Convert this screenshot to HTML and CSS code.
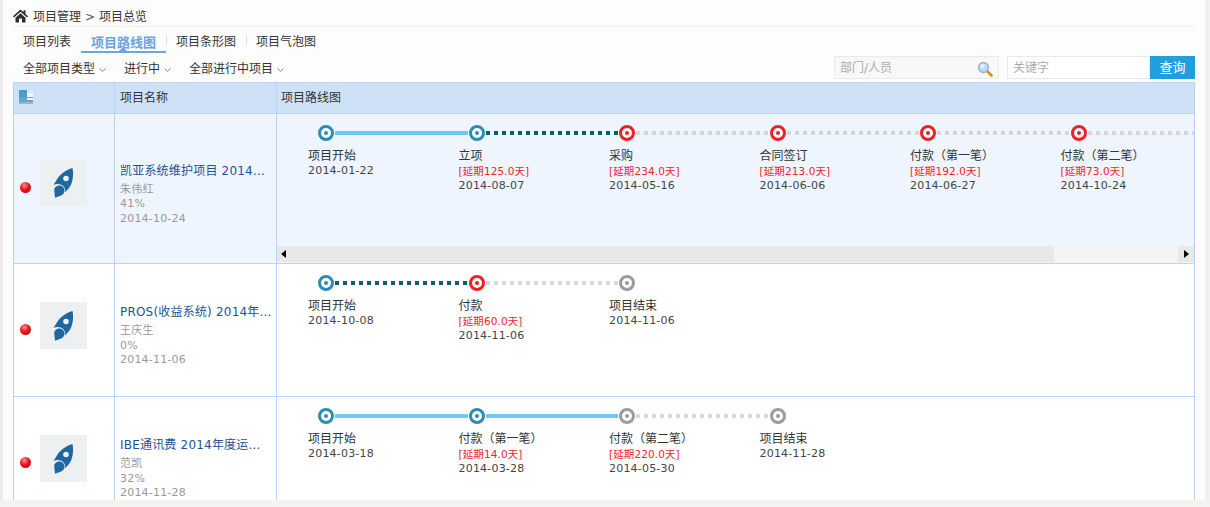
FILE: index.html
```html
<!DOCTYPE html>
<html lang="zh-CN">
<head>
<meta charset="utf-8">
<title>项目总览</title>
<link rel="stylesheet" href="styles.css">
</head>
<body>
<svg class="defs" width="0" height="0" aria-hidden="true">
  <symbol id="rocket" viewBox="0 0 47 47">
    <path d="M32.500 9C26 11 20.500 15 17.500 19.500L13.500 26C17 24 22 25 24 28C25.300 30 25.500 32 25 33.500L29 29C32.500 25 34 16 32.500 9Z" fill="#1f689f"/>
    <circle cx="26" cy="19.500" r="2.800" fill="#ecf0f1"/>
    <path d="M19.500 26.500C22.500 26.500 24.800 29 24.500 32C24.300 34 23 35.800 21.200 36.600L15 38.800L14.200 31C14.300 28.500 16.800 26.500 19.500 26.500Z" fill="#1f689f"/>
  </symbol>
  <symbol id="chev" viewBox="0 0 7 4">
    <path d="M.5.500L3.500 3.300L6.500.500" fill="none" stroke="#888" stroke-width="1"/>
  </symbol>
</svg>
<div class="shell">
  <div class="rail-left"></div>
  <main class="main">
    <nav class="crumb">
      <svg class="home" width="15" height="14" viewBox="0 0 15 14"><path d="M7.500.500L0 7.300L1 8.400L7.500 2.700L14 8.400L15 7.300L12.500 5V1.300H10.500V3.200ZM2.500 8.700V13.500H6V9.500H9V13.500H12.500V8.700L7.500 4.200Z" fill="#2d2d2d"/></svg>
      <span>项目管理</span><span class="crumb-sep">&gt;</span><span>项目总览</span>
    </nav>
    <div class="tabs">
      <a class="tab">项目列表</a>
      <a class="tab tab-active">项目路线图</a>
      <a class="tab tab-sep">项目条形图</a>
      <a class="tab tab-sep">项目气泡图</a>
    </div>
    <div class="toolbar">
      <div class="filters">
        <span class="filter filter-type">全部项目类型<svg class="chev"><use href="#chev"/></svg></span>
        <span class="filter filter-state">进行中<svg class="chev"><use href="#chev"/></svg></span>
        <span class="filter">全部进行中项目<svg class="chev"><use href="#chev"/></svg></span>
      </div>
      <div class="search">
        <div class="field field-people">
          <span>部门/人员</span>
          <svg width="16" height="16" viewBox="0 0 16 16"><path d="M9.500 9.500L14.500 14.500" stroke="#d98a20" stroke-width="2.600" stroke-linecap="round"/><circle cx="6.500" cy="6.500" r="5" fill="#bcdcf6" stroke="#9bb0c2" stroke-width="1.300"/><circle cx="5.500" cy="5" r="2" fill="#e6f3fd"/></svg>
        </div>
        <div class="field field-key">关键字</div>
        <button class="query" type="button">查询</button>
      </div>
    </div>
    <div class="table-wrap">
      <table class="grid">
        <colgroup><col class="c1"><col class="c2"><col></colgroup>
        <thead>
          <tr>
            <th><svg class="head-ico" width="14" height="14" viewBox="0 0 14 14"><rect width="14" height="14" fill="#dfe6ea"/><rect width="8" height="7" fill="#4b9cc6"/><rect x="8" y="3" width="6" height="4" fill="#f4f7f8"/><rect y="7" width="14" height="5" fill="#5ca9cf"/><rect x="8" y="8" width="6" height="2" fill="#eef3f5"/><rect y="12" width="14" height="2" fill="#a9b0b4"/></svg></th>
            <th>项目名称</th>
            <th class="th-route">项目路线图</th>
          </tr>
        </thead>
        <tbody>
          <tr class="row row-a">
            <td><div class="mark"><i class="dot"></i><svg class="rocket"><use href="#rocket"/></svg></div></td>
            <td class="info">
              <a class="name">凯亚系统维护项目 2014...</a>
              <div class="meta meta-gap">朱伟红</div><div class="meta">41%</div><div class="meta">2014-10-24</div>
            </td>
            <td class="route-cell">
              <div class="route-box">
                <div class="route">
                  <div class="step"><div class="track"><i class="node n-blue"></i><i class="line l-solid"></i></div><div class="title">项目开始</div><div class="date">2014-01-22</div></div>
                  <div class="step"><div class="track"><i class="node n-blue"></i><i class="line l-green"></i></div><div class="title">立项</div><div class="late">[延期125.0天]</div><div class="date">2014-08-07</div></div>
                  <div class="step"><div class="track"><i class="node n-red"></i><i class="line l-grey"></i></div><div class="title">采购</div><div class="late">[延期234.0天]</div><div class="date">2014-05-16</div></div>
                  <div class="step"><div class="track"><i class="node n-red"></i><i class="line l-grey"></i></div><div class="title">合同签订</div><div class="late">[延期213.0天]</div><div class="date">2014-06-06</div></div>
                  <div class="step"><div class="track"><i class="node n-red"></i><i class="line l-grey"></i></div><div class="title">付款（第一笔）</div><div class="late">[延期192.0天]</div><div class="date">2014-06-27</div></div>
                  <div class="step"><div class="track"><i class="node n-red"></i><i class="line l-grey"></i></div><div class="title">付款（第二笔）</div><div class="late">[延期73.0天]</div><div class="date">2014-10-24</div></div>
                </div>
                <div class="hscroll">
                  <span class="sb-btn"><i class="arrow-l"></i></span>
                  <span class="sb-thumb"></span>
                  <span class="sb-track"></span>
                  <span class="sb-btn sb-btn-r"><i class="arrow-r"></i></span>
                </div>
              </div>
            </td>
          </tr>
          <tr class="row row-b">
            <td><div class="mark"><i class="dot"></i><svg class="rocket"><use href="#rocket"/></svg></div></td>
            <td class="info">
              <a class="name">PROS(收益系统) 2014年...</a>
              <div class="meta meta-gap">王庆生</div><div class="meta">0%</div><div class="meta">2014-11-06</div>
            </td>
            <td class="route-cell">
              <div class="route">
                <div class="step"><div class="track"><i class="node n-blue"></i><i class="line l-green"></i></div><div class="title">项目开始</div><div class="date">2014-10-08</div></div>
                <div class="step"><div class="track"><i class="node n-red"></i><i class="line l-grey"></i></div><div class="title">付款</div><div class="late">[延期60.0天]</div><div class="date">2014-11-06</div></div>
                <div class="step"><div class="track"><i class="node n-grey"></i></div><div class="title">项目结束</div><div class="date">2014-11-06</div></div>
              </div>
            </td>
          </tr>
          <tr class="row row-c">
            <td><div class="mark"><i class="dot"></i><svg class="rocket"><use href="#rocket"/></svg></div></td>
            <td class="info">
              <a class="name">IBE通讯费 2014年度运...</a>
              <div class="meta meta-gap">范凯</div><div class="meta">32%</div><div class="meta">2014-11-28</div>
            </td>
            <td class="route-cell">
              <div class="route">
                <div class="step"><div class="track"><i class="node n-blue"></i><i class="line l-solid"></i></div><div class="title">项目开始</div><div class="date">2014-03-18</div></div>
                <div class="step"><div class="track"><i class="node n-blue"></i><i class="line l-solid"></i></div><div class="title">付款（第一笔）</div><div class="late">[延期14.0天]</div><div class="date">2014-03-28</div></div>
                <div class="step"><div class="track"><i class="node n-grey"></i><i class="line l-grey"></i></div><div class="title">付款（第二笔）</div><div class="late">[延期220.0天]</div><div class="date">2014-05-30</div></div>
                <div class="step"><div class="track"><i class="node n-grey"></i></div><div class="title">项目结束</div><div class="date">2014-11-28</div></div>
              </div>
            </td>
          </tr>
        </tbody>
      </table>
    </div>
  </main>
  <div class="rail-right"></div>
</div>
<div class="footer-strip"></div>
</body>
</html>
```
FILE: styles.css
```css
* { box-sizing: border-box; }
html, body { margin: 0; height: 100%; overflow: hidden; }
body {
  display: flex;
  flex-direction: column;
  background: #fdfdfd;
  color: #333;
  font: 12px/15px "DejaVu Sans", "Noto Sans CJK SC", sans-serif;
}
.defs { position: absolute; }
.shell { flex: 1; min-height: 0; display: flex; }
.rail-left { width: 3px; background: #ececec; }
.rail-right { width: 5px; background: #f1f1f1; }
.footer-strip { height: 7px; background: #f3f3f1; }
.main { flex: 1; min-width: 0; padding: 0 10px; display: flex; flex-direction: column; overflow: hidden; }

.crumb { height: 27px; padding-top: 10px; display: flex; align-items: flex-start; border-bottom: 1px solid #eee; line-height: 15px; color: #333; }
.home { margin-right: 5px; margin-top: -1px; }
.crumb-sep { margin: 0 4px; color: #555; }

.tabs { height: 26px; padding: 8px 0 0 10px; display: flex; }
.tab { height: 18px; line-height: 15px; padding-right: 20px; position: relative; color: #333; }
.tab-active { margin-left: -10px; padding: 0 10px; width: 85px; border-bottom: 2px solid #70a5dc; color: #6aa3dc; font-size: 13px; font-weight: bold; white-space: nowrap; }
.tab-active::after { content: ""; position: absolute; left: 38px; bottom: 0; border: 4px solid transparent; border-top: 0; border-bottom-color: #70a5dc; }
.tab-sep { padding-left: 10px; padding-right: 10px; }
.tab-sep::before { content: ""; position: absolute; left: 0; top: 0; height: 10px; width: 1px; background: #ddd; }

.toolbar { height: 29px; padding: 3px 0 0 10px; display: flex; justify-content: space-between; }
.filters { display: flex; padding-top: 6px; }
.filter { display: flex; align-items: center; height: 15px; margin-right: 16px; color: #333; }
.filter-type { margin-right: 18px; }
.filter-state { margin-right: 18px; }
.chev { width: 7px; height: 4px; margin-left: 4px; margin-top: 1px; }
.search { display: flex; height: 23px; }
.field { height: 23px; border: 1px solid #eaeaea; padding: 4px 5px 0; color: #aaa; display: flex; justify-content: space-between; }
.field-people { width: 165px; margin-right: 8px; background: #f8f8f8; }
.field-key { width: 143px; background: #fff; }
.query { width: 45px; height: 23px; border: 0; padding: 0 0 3px; background: #1fa0dc; color: #fff; font: 13px "DejaVu Sans", "Noto Sans CJK SC", sans-serif; }

.table-wrap { flex: 1; min-height: 0; overflow: hidden; }
.grid { width: 100%; table-layout: fixed; border-collapse: collapse; }
.c1 { width: 101px; }
.c2 { width: 162px; }
.grid th, .grid td { border: 1px solid #b9d5f6; padding: 0; }
.grid th { height: 31px; background: #cfe1f7; font-weight: normal; text-align: left; padding: 1px 0 0 5px; color: #333; }
.grid .th-route { padding-left: 4px; }
.head-ico { display: block; transform: translateY(-2px); }
.row-a { height: 150px; background: #eef5ff; }
.row-b { height: 133px; background: #fff; }
.row-c { height: 133px; background: #fff; }
.mark { display: flex; align-items: center; padding: 0 0 10px 6px; }
.row-a .mark { padding-bottom: 12px; }
.dot { width: 11px; height: 11px; border-radius: 50%; margin-right: 9px; margin-top: 8px; background: radial-gradient(circle at 40% 30%, #ff8f8f 0, #e8141c 45%, #a80a10 100%); }
.row-a .dot { margin-top: 10px; }
.rocket { width: 47px; height: 47px; background: #ecf0f1; display: block; }
.grid .info { padding: 13px 0 0 5px; vertical-align: middle; }
.name { display: block; color: #1d5296; white-space: nowrap; line-height: 15px; letter-spacing: .2px; }
.meta { color: #999; font-size: 11px; line-height: 14.500px; letter-spacing: .2px; }
.meta-gap { margin-top: 4px; }
.route-cell { vertical-align: top; overflow: hidden; }
.route-box { height: 148px; display: flex; flex-direction: column; justify-content: space-between; }
.route { display: flex; width: 917px; overflow: hidden; padding: 10px 0 0 31px; }
.step { flex: 0 0 150.500px; min-width: 150.500px; }
.track { display: flex; align-items: center; width: 100%; height: 18px; margin-left: 9px; }
.node { flex: none; width: 16px; height: 16px; margin: 0 1px; border-radius: 50%; border: 3px solid; background: #fff; position: relative; }
.node::after { content: ""; position: absolute; left: 3px; top: 3px; width: 4px; height: 4px; border-radius: 50%; }
.n-blue { border-color: #2c8db3; }
.n-blue::after { background: #2c8db3; }
.n-red { border-color: #ec2027; }
.n-red::after { background: #ec2027; }
.n-grey { border-color: #9a9aa2; }
.n-grey::after { background: #9a9aa2; }
.line { flex: 1; height: 4px; }
.l-solid { background: #70c6f5; }
.l-green { background: repeating-linear-gradient(90deg, #006560 0 4px, transparent 4px 8px); }
.l-grey { background: repeating-linear-gradient(90deg, #d8d8d8 0 4px, transparent 4px 8px); }
.title { margin-top: 7px; color: #333; white-space: nowrap; }
.date { font-size: 11px; line-height: 14.500px; color: #444; letter-spacing: .2px; white-space: nowrap; }
.late { font-size: 10.500px; line-height: 14.500px; color: #f5222d; letter-spacing: .1px; white-space: nowrap; }
.hscroll { display: flex; height: 16px; }
.sb-btn { flex: none; width: 12px; background: #e8e8e8; display: flex; align-items: center; justify-content: center; }
.sb-btn-r { width: 16px; }
.sb-thumb { flex: none; width: 765px; background: #e8e8e8; }
.sb-track { flex: 1; background: #f4f4f4; }
.arrow-l { border: 4px solid transparent; border-left: 0; border-right: 5px solid #000; }
.arrow-r { border: 4px solid transparent; border-right: 0; border-left: 5px solid #000; }
```
